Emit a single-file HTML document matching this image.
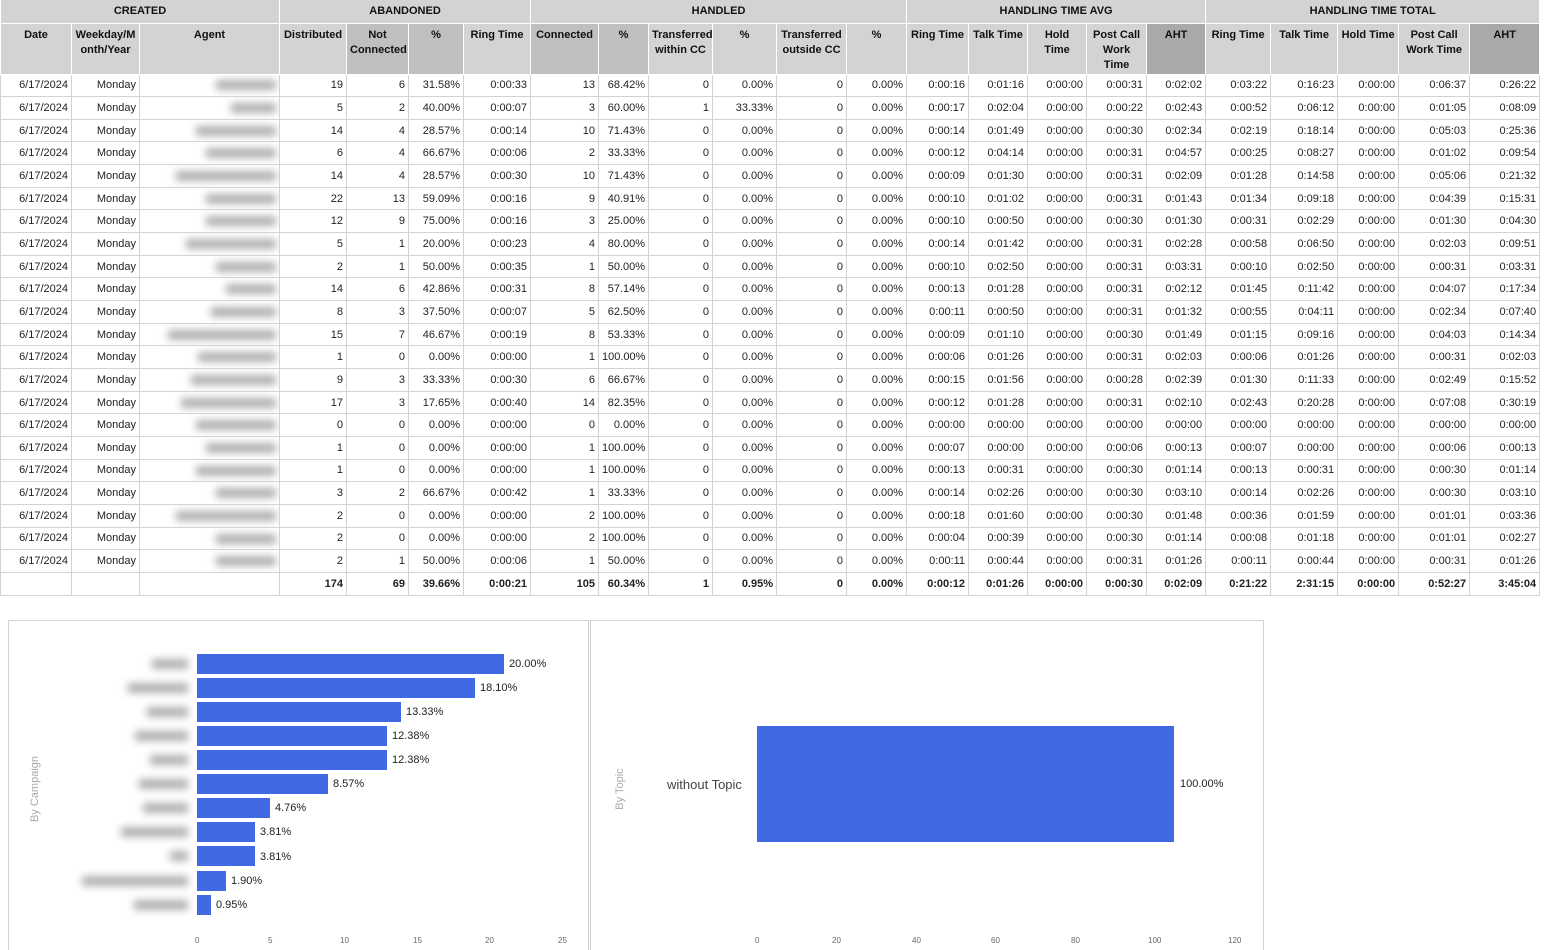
<!DOCTYPE html>
<html><head><meta charset="utf-8"><style>
html,body{margin:0;background:#fff;font-family:"Liberation Sans",Arial,sans-serif;width:1554px;height:950px;overflow:hidden;position:relative}
table{border-collapse:collapse;table-layout:fixed;width:1539px;position:absolute;left:0;top:0;font-size:11px;color:#222}
td,th{border:1px solid #d3d3d3;padding:0 3px;overflow:hidden;white-space:nowrap}
th{background:#d3d3d3;font-weight:bold;vertical-align:top;text-align:center;border-color:#fff;white-space:normal;line-height:15px;color:#111}
tr.r1{height:23px}
tr.r1 th{padding-top:3px;border-top:0;vertical-align:middle;padding-top:0}
tr.r2{height:51px}
tr.r2 th{padding-top:4px}
th.d{background:#bfbfbf}th.a{background:#a9a9a9}
tbody tr{height:22.67px}
td{text-align:right;vertical-align:middle}
tfoot tr{height:23px}
tfoot td{font-weight:bold}
td i{display:inline-block;height:10px;background:#b0b0b0;filter:blur(4px);vertical-align:middle}
.p{position:absolute;border:1px solid #d3d3d3}
.b{position:absolute;background:#4169e1;height:20px}
.l{position:absolute;font-size:11px;color:#222}
.n{position:absolute;height:10px;background:#b0b0b0;filter:blur(4px)}
.t{position:absolute;font-size:8px;color:#666;top:936px}
</style></head><body>
<table>
<colgroup><col style="width:71px"><col style="width:68px"><col style="width:140px"><col style="width:67px"><col style="width:62px"><col style="width:55px"><col style="width:67px"><col style="width:68px"><col style="width:50px"><col style="width:64px"><col style="width:64px"><col style="width:70px"><col style="width:60px"><col style="width:62px"><col style="width:59px"><col style="width:59px"><col style="width:60px"><col style="width:59px"><col style="width:65px"><col style="width:67px"><col style="width:61px"><col style="width:71px"><col style="width:70px"></colgroup>
<thead>
<tr class="r1"><th colspan="3">CREATED</th><th colspan="4">ABANDONED</th><th colspan="6">HANDLED</th><th colspan="5">HANDLING TIME AVG</th><th colspan="5">HANDLING TIME TOTAL</th></tr>
<tr class="r2"><th>Date</th><th>Weekday/M onth/Year</th><th>Agent</th><th>Distributed</th><th class="d">Not Connected</th><th class="d">%</th><th>Ring Time</th><th class="d">Connected</th><th class="d">%</th><th>Transferred within CC</th><th>%</th><th>Transferred outside CC</th><th>%</th><th>Ring Time</th><th>Talk Time</th><th>Hold Time</th><th>Post Call Work Time</th><th class="a">AHT</th><th>Ring Time</th><th>Talk Time</th><th>Hold Time</th><th>Post Call Work Time</th><th class="a">AHT</th></tr>
</thead>
<tbody>
<tr><td>6/17/2024</td><td>Monday</td><td><i style="width:60px"></i></td><td>19</td><td>6</td><td>31.58%</td><td>0:00:33</td><td>13</td><td>68.42%</td><td>0</td><td>0.00%</td><td>0</td><td>0.00%</td><td>0:00:16</td><td>0:01:16</td><td>0:00:00</td><td>0:00:31</td><td>0:02:02</td><td>0:03:22</td><td>0:16:23</td><td>0:00:00</td><td>0:06:37</td><td>0:26:22</td></tr>
<tr><td>6/17/2024</td><td>Monday</td><td><i style="width:45px"></i></td><td>5</td><td>2</td><td>40.00%</td><td>0:00:07</td><td>3</td><td>60.00%</td><td>1</td><td>33.33%</td><td>0</td><td>0.00%</td><td>0:00:17</td><td>0:02:04</td><td>0:00:00</td><td>0:00:22</td><td>0:02:43</td><td>0:00:52</td><td>0:06:12</td><td>0:00:00</td><td>0:01:05</td><td>0:08:09</td></tr>
<tr><td>6/17/2024</td><td>Monday</td><td><i style="width:80px"></i></td><td>14</td><td>4</td><td>28.57%</td><td>0:00:14</td><td>10</td><td>71.43%</td><td>0</td><td>0.00%</td><td>0</td><td>0.00%</td><td>0:00:14</td><td>0:01:49</td><td>0:00:00</td><td>0:00:30</td><td>0:02:34</td><td>0:02:19</td><td>0:18:14</td><td>0:00:00</td><td>0:05:03</td><td>0:25:36</td></tr>
<tr><td>6/17/2024</td><td>Monday</td><td><i style="width:70px"></i></td><td>6</td><td>4</td><td>66.67%</td><td>0:00:06</td><td>2</td><td>33.33%</td><td>0</td><td>0.00%</td><td>0</td><td>0.00%</td><td>0:00:12</td><td>0:04:14</td><td>0:00:00</td><td>0:00:31</td><td>0:04:57</td><td>0:00:25</td><td>0:08:27</td><td>0:00:00</td><td>0:01:02</td><td>0:09:54</td></tr>
<tr><td>6/17/2024</td><td>Monday</td><td><i style="width:100px"></i></td><td>14</td><td>4</td><td>28.57%</td><td>0:00:30</td><td>10</td><td>71.43%</td><td>0</td><td>0.00%</td><td>0</td><td>0.00%</td><td>0:00:09</td><td>0:01:30</td><td>0:00:00</td><td>0:00:31</td><td>0:02:09</td><td>0:01:28</td><td>0:14:58</td><td>0:00:00</td><td>0:05:06</td><td>0:21:32</td></tr>
<tr><td>6/17/2024</td><td>Monday</td><td><i style="width:70px"></i></td><td>22</td><td>13</td><td>59.09%</td><td>0:00:16</td><td>9</td><td>40.91%</td><td>0</td><td>0.00%</td><td>0</td><td>0.00%</td><td>0:00:10</td><td>0:01:02</td><td>0:00:00</td><td>0:00:31</td><td>0:01:43</td><td>0:01:34</td><td>0:09:18</td><td>0:00:00</td><td>0:04:39</td><td>0:15:31</td></tr>
<tr><td>6/17/2024</td><td>Monday</td><td><i style="width:70px"></i></td><td>12</td><td>9</td><td>75.00%</td><td>0:00:16</td><td>3</td><td>25.00%</td><td>0</td><td>0.00%</td><td>0</td><td>0.00%</td><td>0:00:10</td><td>0:00:50</td><td>0:00:00</td><td>0:00:30</td><td>0:01:30</td><td>0:00:31</td><td>0:02:29</td><td>0:00:00</td><td>0:01:30</td><td>0:04:30</td></tr>
<tr><td>6/17/2024</td><td>Monday</td><td><i style="width:90px"></i></td><td>5</td><td>1</td><td>20.00%</td><td>0:00:23</td><td>4</td><td>80.00%</td><td>0</td><td>0.00%</td><td>0</td><td>0.00%</td><td>0:00:14</td><td>0:01:42</td><td>0:00:00</td><td>0:00:31</td><td>0:02:28</td><td>0:00:58</td><td>0:06:50</td><td>0:00:00</td><td>0:02:03</td><td>0:09:51</td></tr>
<tr><td>6/17/2024</td><td>Monday</td><td><i style="width:60px"></i></td><td>2</td><td>1</td><td>50.00%</td><td>0:00:35</td><td>1</td><td>50.00%</td><td>0</td><td>0.00%</td><td>0</td><td>0.00%</td><td>0:00:10</td><td>0:02:50</td><td>0:00:00</td><td>0:00:31</td><td>0:03:31</td><td>0:00:10</td><td>0:02:50</td><td>0:00:00</td><td>0:00:31</td><td>0:03:31</td></tr>
<tr><td>6/17/2024</td><td>Monday</td><td><i style="width:50px"></i></td><td>14</td><td>6</td><td>42.86%</td><td>0:00:31</td><td>8</td><td>57.14%</td><td>0</td><td>0.00%</td><td>0</td><td>0.00%</td><td>0:00:13</td><td>0:01:28</td><td>0:00:00</td><td>0:00:31</td><td>0:02:12</td><td>0:01:45</td><td>0:11:42</td><td>0:00:00</td><td>0:04:07</td><td>0:17:34</td></tr>
<tr><td>6/17/2024</td><td>Monday</td><td><i style="width:65px"></i></td><td>8</td><td>3</td><td>37.50%</td><td>0:00:07</td><td>5</td><td>62.50%</td><td>0</td><td>0.00%</td><td>0</td><td>0.00%</td><td>0:00:11</td><td>0:00:50</td><td>0:00:00</td><td>0:00:31</td><td>0:01:32</td><td>0:00:55</td><td>0:04:11</td><td>0:00:00</td><td>0:02:34</td><td>0:07:40</td></tr>
<tr><td>6/17/2024</td><td>Monday</td><td><i style="width:108px"></i></td><td>15</td><td>7</td><td>46.67%</td><td>0:00:19</td><td>8</td><td>53.33%</td><td>0</td><td>0.00%</td><td>0</td><td>0.00%</td><td>0:00:09</td><td>0:01:10</td><td>0:00:00</td><td>0:00:30</td><td>0:01:49</td><td>0:01:15</td><td>0:09:16</td><td>0:00:00</td><td>0:04:03</td><td>0:14:34</td></tr>
<tr><td>6/17/2024</td><td>Monday</td><td><i style="width:78px"></i></td><td>1</td><td>0</td><td>0.00%</td><td>0:00:00</td><td>1</td><td>100.00%</td><td>0</td><td>0.00%</td><td>0</td><td>0.00%</td><td>0:00:06</td><td>0:01:26</td><td>0:00:00</td><td>0:00:31</td><td>0:02:03</td><td>0:00:06</td><td>0:01:26</td><td>0:00:00</td><td>0:00:31</td><td>0:02:03</td></tr>
<tr><td>6/17/2024</td><td>Monday</td><td><i style="width:85px"></i></td><td>9</td><td>3</td><td>33.33%</td><td>0:00:30</td><td>6</td><td>66.67%</td><td>0</td><td>0.00%</td><td>0</td><td>0.00%</td><td>0:00:15</td><td>0:01:56</td><td>0:00:00</td><td>0:00:28</td><td>0:02:39</td><td>0:01:30</td><td>0:11:33</td><td>0:00:00</td><td>0:02:49</td><td>0:15:52</td></tr>
<tr><td>6/17/2024</td><td>Monday</td><td><i style="width:95px"></i></td><td>17</td><td>3</td><td>17.65%</td><td>0:00:40</td><td>14</td><td>82.35%</td><td>0</td><td>0.00%</td><td>0</td><td>0.00%</td><td>0:00:12</td><td>0:01:28</td><td>0:00:00</td><td>0:00:31</td><td>0:02:10</td><td>0:02:43</td><td>0:20:28</td><td>0:00:00</td><td>0:07:08</td><td>0:30:19</td></tr>
<tr><td>6/17/2024</td><td>Monday</td><td><i style="width:80px"></i></td><td>0</td><td>0</td><td>0.00%</td><td>0:00:00</td><td>0</td><td>0.00%</td><td>0</td><td>0.00%</td><td>0</td><td>0.00%</td><td>0:00:00</td><td>0:00:00</td><td>0:00:00</td><td>0:00:00</td><td>0:00:00</td><td>0:00:00</td><td>0:00:00</td><td>0:00:00</td><td>0:00:00</td><td>0:00:00</td></tr>
<tr><td>6/17/2024</td><td>Monday</td><td><i style="width:70px"></i></td><td>1</td><td>0</td><td>0.00%</td><td>0:00:00</td><td>1</td><td>100.00%</td><td>0</td><td>0.00%</td><td>0</td><td>0.00%</td><td>0:00:07</td><td>0:00:00</td><td>0:00:00</td><td>0:00:06</td><td>0:00:13</td><td>0:00:07</td><td>0:00:00</td><td>0:00:00</td><td>0:00:06</td><td>0:00:13</td></tr>
<tr><td>6/17/2024</td><td>Monday</td><td><i style="width:80px"></i></td><td>1</td><td>0</td><td>0.00%</td><td>0:00:00</td><td>1</td><td>100.00%</td><td>0</td><td>0.00%</td><td>0</td><td>0.00%</td><td>0:00:13</td><td>0:00:31</td><td>0:00:00</td><td>0:00:30</td><td>0:01:14</td><td>0:00:13</td><td>0:00:31</td><td>0:00:00</td><td>0:00:30</td><td>0:01:14</td></tr>
<tr><td>6/17/2024</td><td>Monday</td><td><i style="width:60px"></i></td><td>3</td><td>2</td><td>66.67%</td><td>0:00:42</td><td>1</td><td>33.33%</td><td>0</td><td>0.00%</td><td>0</td><td>0.00%</td><td>0:00:14</td><td>0:02:26</td><td>0:00:00</td><td>0:00:30</td><td>0:03:10</td><td>0:00:14</td><td>0:02:26</td><td>0:00:00</td><td>0:00:30</td><td>0:03:10</td></tr>
<tr><td>6/17/2024</td><td>Monday</td><td><i style="width:100px"></i></td><td>2</td><td>0</td><td>0.00%</td><td>0:00:00</td><td>2</td><td>100.00%</td><td>0</td><td>0.00%</td><td>0</td><td>0.00%</td><td>0:00:18</td><td>0:01:60</td><td>0:00:00</td><td>0:00:30</td><td>0:01:48</td><td>0:00:36</td><td>0:01:59</td><td>0:00:00</td><td>0:01:01</td><td>0:03:36</td></tr>
<tr><td>6/17/2024</td><td>Monday</td><td><i style="width:60px"></i></td><td>2</td><td>0</td><td>0.00%</td><td>0:00:00</td><td>2</td><td>100.00%</td><td>0</td><td>0.00%</td><td>0</td><td>0.00%</td><td>0:00:04</td><td>0:00:39</td><td>0:00:00</td><td>0:00:30</td><td>0:01:14</td><td>0:00:08</td><td>0:01:18</td><td>0:00:00</td><td>0:01:01</td><td>0:02:27</td></tr>
<tr><td>6/17/2024</td><td>Monday</td><td><i style="width:60px"></i></td><td>2</td><td>1</td><td>50.00%</td><td>0:00:06</td><td>1</td><td>50.00%</td><td>0</td><td>0.00%</td><td>0</td><td>0.00%</td><td>0:00:11</td><td>0:00:44</td><td>0:00:00</td><td>0:00:31</td><td>0:01:26</td><td>0:00:11</td><td>0:00:44</td><td>0:00:00</td><td>0:00:31</td><td>0:01:26</td></tr>
</tbody>
<tfoot><tr><td></td><td></td><td></td><td>174</td><td>69</td><td>39.66%</td><td>0:00:21</td><td>105</td><td>60.34%</td><td>1</td><td>0.95%</td><td>0</td><td>0.00%</td><td>0:00:12</td><td>0:01:26</td><td>0:00:00</td><td>0:00:30</td><td>0:02:09</td><td>0:21:22</td><td>2:31:15</td><td>0:00:00</td><td>0:52:27</td><td>3:45:04</td></tr></tfoot>
</table>

<div class="p" style="left:8px;top:620px;width:579px;height:335px"></div>
<div class="p" style="left:590px;top:620px;width:672px;height:335px"></div>

<div style="position:absolute;left:-15px;top:783px;width:100px;text-align:center;transform:rotate(-90deg);font-size:11px;color:#aaa">By Campaign</div>
<div style="position:absolute;left:570px;top:783px;width:100px;text-align:center;transform:rotate(-90deg);font-size:11px;color:#aaa">By Topic</div>

<div class="n" style="left:152px;top:659px;width:36px"></div>
<div class="n" style="left:128px;top:683px;width:60px"></div>
<div class="n" style="left:147px;top:707px;width:41px"></div>
<div class="n" style="left:135px;top:731px;width:53px"></div>
<div class="n" style="left:150px;top:755px;width:38px"></div>
<div class="n" style="left:139px;top:779px;width:49px"></div>
<div class="n" style="left:143px;top:803px;width:45px"></div>
<div class="n" style="left:121px;top:827px;width:67px"></div>
<div class="n" style="left:170px;top:851px;width:18px"></div>
<div class="n" style="left:82px;top:876px;width:106px"></div>
<div class="n" style="left:134px;top:900px;width:54px"></div>

<div class="b" style="left:197px;top:654px;width:307px"></div><div class="l" style="left:509px;top:658px">20.00%</div>
<div class="b" style="left:197px;top:678px;width:278px"></div><div class="l" style="left:480px;top:682px">18.10%</div>
<div class="b" style="left:197px;top:702px;width:204px"></div><div class="l" style="left:406px;top:706px">13.33%</div>
<div class="b" style="left:197px;top:726px;width:190px"></div><div class="l" style="left:392px;top:730px">12.38%</div>
<div class="b" style="left:197px;top:750px;width:190px"></div><div class="l" style="left:392px;top:754px">12.38%</div>
<div class="b" style="left:197px;top:774px;width:131px"></div><div class="l" style="left:333px;top:778px">8.57%</div>
<div class="b" style="left:197px;top:798px;width:73px"></div><div class="l" style="left:275px;top:802px">4.76%</div>
<div class="b" style="left:197px;top:822px;width:58px"></div><div class="l" style="left:260px;top:826px">3.81%</div>
<div class="b" style="left:197px;top:846px;width:58px"></div><div class="l" style="left:260px;top:851px">3.81%</div>
<div class="b" style="left:197px;top:871px;width:29px"></div><div class="l" style="left:231px;top:875px">1.90%</div>
<div class="b" style="left:197px;top:895px;width:14px"></div><div class="l" style="left:216px;top:899px">0.95%</div>

<div class="t" style="left:195px">0</div><div class="t" style="left:268px">5</div><div class="t" style="left:340px">10</div><div class="t" style="left:413px">15</div><div class="t" style="left:485px">20</div><div class="t" style="left:558px">25</div>

<div class="b" style="left:757px;top:726px;width:417px;height:116px"></div>
<div class="l" style="left:667px;top:777px;font-size:13px;color:#444">without Topic</div>
<div class="l" style="left:1180px;top:778px">100.00%</div>
<div class="t" style="left:755px">0</div><div class="t" style="left:832px">20</div><div class="t" style="left:912px">40</div><div class="t" style="left:991px">60</div><div class="t" style="left:1071px">80</div><div class="t" style="left:1148px">100</div><div class="t" style="left:1228px">120</div>
</body></html>
